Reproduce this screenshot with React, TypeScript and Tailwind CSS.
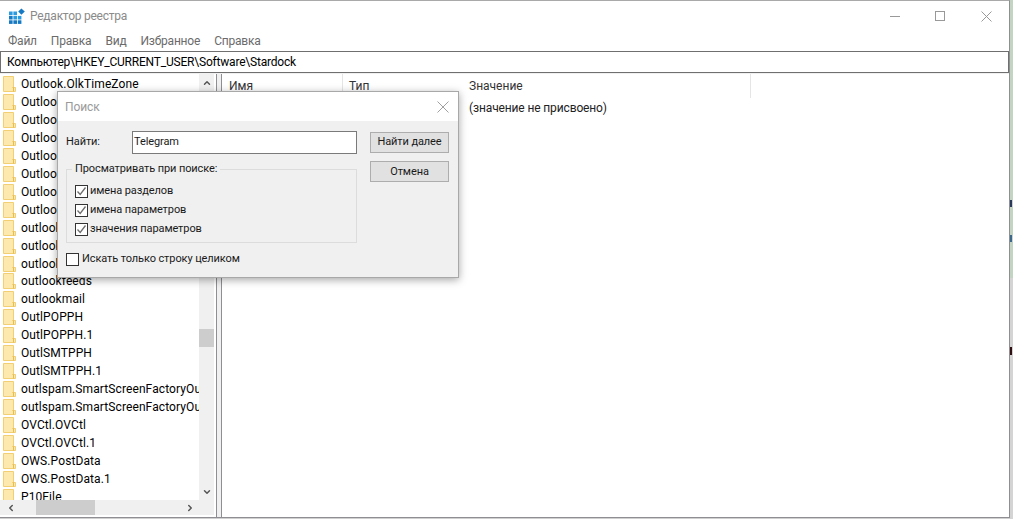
import React from 'react';
import { ChevronDown, ChevronLeft, ChevronRight, ChevronUp } from 'lucide-react';

const keys = [
  'Outlook.OlkTimeZone',
  'Outlook.OlkUserButton',
  'Outlook.OlkView',
  'Outlook.OlkWebBrowser',
  'Outlook.OMSMail',
  'Outlook.Shortcut',
  'Outlook.Sharing',
  'Outlook.Storage',
  'outlookarchive',
  'outlookcal',
  'outlookconnect',
  'outlookfeeds',
  'outlookmail',
  'OutlPOPPH',
  'OutlPOPPH.1',
  'OutlSMTPPH',
  'OutlSMTPPH.1',
  'outlspam.SmartScreenFactoryOutlook',
  'outlspam.SmartScreenFactoryOutlook.1',
  'OVCtl.OVCtl',
  'OVCtl.OVCtl.1',
  'OWS.PostData',
  'OWS.PostData.1',
  'P10File',
];

const Folder = () => (
  <svg width="13" height="16" viewBox="0 0 13 16" className="shrink-0">
    <path d="M0.5 0.5H10.5V11.5H12.5V15.5H0.5Z" fill="#fde9ad" stroke="#f2cf72" />
    <path d="M9.5 11.5H10.5V15.5" fill="none" stroke="#e6bb50" />
  </svg>
);

const Check = ({ checked = true }: { checked?: boolean }) => (
  <span className="w-[13px] h-[13px] shrink-0 border border-[#333333] bg-white flex items-center justify-center">
    {checked && (
      <svg width="11" height="11" viewBox="0 0 11 11">
        <path d="M1.5 5.5L4.2 8.5L9.5 1.5" fill="none" stroke="#6d6d6d" strokeWidth="1.3" />
      </svg>
    )}
  </span>
);

const Option = ({ label }: { label: string }) => (
  <div className="flex items-center gap-[2px] h-[19px]">
    <Check />
    <span className="pb-px">{label}</span>
  </div>
);

const App: React.FC = () => {
  return (
    <div
      className="w-[1013px] h-[519px] flex overflow-hidden bg-[#d0d0d0] text-[12px] text-[#1a1a1a]"
      style={{ fontFamily: 'Roboto, "Noto Sans", sans-serif' }}
    >
      <div className="relative w-[1010px] h-[518px] shrink-0 flex flex-col bg-[#f0f0f0] border-t border-t-[#a9a9a9] border-r border-r-[#8e8e93]">
        {/* title bar */}
        <div className="h-[30px] shrink-0 flex items-center bg-white pl-[9px]">
          <svg width="16" height="16" viewBox="0 0 16 16" className="shrink-0">
            <rect x="0" y="3.5" width="3.6" height="3.6" fill="#2a9be0" />
            <rect x="4.4" y="3.5" width="3.6" height="3.6" fill="#2a9be0" />
            <rect x="0" y="7.9" width="3.6" height="3.6" fill="#1679c4" />
            <rect x="4.4" y="7.9" width="3.6" height="3.6" fill="#2a9be0" />
            <rect x="8.8" y="7.9" width="3.6" height="3.6" fill="#2a9be0" />
            <rect x="0" y="12.3" width="3.6" height="3.6" fill="#1679c4" />
            <rect x="4.4" y="12.3" width="3.6" height="3.6" fill="#1679c4" />
            <rect x="8.8" y="12.3" width="3.6" height="3.6" fill="#1679c4" />
            <path d="M12.4 0.5L15.8 3.6L12.4 6.7L9.2 3.6Z" fill="#1679c4" />
          </svg>
          <span className="ml-[5px] text-[#8a8a8a] tracking-[-0.25px]">Редактор реестра</span>
          <div className="ml-auto flex items-center">
            <svg width="11" height="11" viewBox="0 0 11 11" className="mr-[34px]">
              <path d="M0 5.5H10" stroke="#999999" />
            </svg>
            <svg width="11" height="11" viewBox="0 0 11 11" className="mr-[35px]">
              <rect x="0.5" y="0.5" width="9" height="9" fill="none" stroke="#999999" />
            </svg>
            <svg width="11" height="11" viewBox="0 0 11 11" className="mr-[17px]">
              <path d="M0.5 0.5L10.5 10.5M10.5 0.5L0.5 10.5" stroke="#999999" />
            </svg>
          </div>
        </div>
        {/* menu */}
        <div className="h-[20px] shrink-0 flex items-center gap-[14px] bg-white pl-[8px] text-[#6b6b6b] tracking-[-0.2px]">
          <span>Файл</span>
          <span>Правка</span>
          <span>Вид</span>
          <span>Избранное</span>
          <span>Справка</span>
        </div>
        {/* address bar */}
        <div className="h-[22px] shrink-0 flex items-center bg-white border border-[#6f6f6f] pl-[6px] pb-px text-black tracking-[-0.2px]">
          Компьютер\HKEY_CURRENT_USER\Software\Stardock
        </div>
        {/* panes */}
        <div className="flex-1 min-h-0 flex pt-px border-b border-b-[#8e8e93]">
          <div className="w-[217px] shrink-0 flex flex-col bg-white border-r border-r-[#8e8e93] overflow-hidden pr-[2px] pb-[2px]">
            <div className="flex-1 min-h-0 flex">
              <div className="w-[199px] shrink-0 overflow-hidden pl-[3px] pt-px">
                {keys.map((k) => (
                  <div key={k} className="h-[17.96px] flex items-center gap-[5px] whitespace-nowrap">
                    <Folder />
                    <span className="text-black tracking-[0.1px]">{k}</span>
                  </div>
                ))}
              </div>
              <div className="w-[15px] shrink-0 flex flex-col bg-[#f0f0f0]">
                <div className="h-[17px] flex items-center justify-center">
                  <ChevronUp className="w-[10px] h-[10px] text-[#555555]" strokeWidth={3.5} />
                </div>
                <div className="h-[238px]" />
                <div className="h-[18px] bg-[#cdcdcd]" />
                <div className="flex-1" />
                <div className="h-[17px] flex items-center justify-center">
                  <ChevronDown className="w-[10px] h-[10px] text-[#555555]" strokeWidth={3.5} />
                </div>
              </div>
            </div>
            <div className="h-[15px] shrink-0 flex items-center bg-[#f0f0f0] w-[214px]">
              <div className="w-[36px] flex items-center pl-[6px]">
                <ChevronLeft className="w-[10px] h-[10px] text-[#555555]" strokeWidth={3.5} />
              </div>
              <div className="w-[59px] h-[15px] bg-[#cdcdcd]" />
              <div className="ml-[90px] w-[10px] flex items-center">
                <ChevronRight className="w-[10px] h-[10px] text-[#555555]" strokeWidth={3.5} />
              </div>
            </div>
          </div>
          <div className="w-[4px] shrink-0" />
          <div className="flex-1 min-w-0 bg-white border-l border-l-[#8e8e93]">
            <div className="h-[24px] flex items-center text-[#333333]">
              <div className="w-[121px] h-full flex items-center pl-[7px] border-r border-r-[#e5e5e5]">Имя</div>
              <div className="w-[126px] h-full flex items-center pl-[6px]">Тип</div>
              <div className="w-[282px] h-full flex items-center border-r border-r-[#e5e5e5]">Значение</div>
            </div>
            <div className="h-[20px] flex items-center pl-[247px] text-[#222222] tracking-[-0.13px]">(значение не присвоено)</div>
          </div>
        </div>

        {/* find dialog */}
        <div className="absolute left-[57px] top-[90px] w-[402px] h-[187px] flex flex-col bg-[#f0f0f0] border border-[#a8a8a8] text-[11px] tracking-[-0.1px] shadow-[0_2px_8px_rgba(0,0,0,0.35)]">
          <div className="h-[29px] shrink-0 flex items-center justify-between bg-white pl-[7px] pr-[9px] text-[12px]">
            <span className="text-[#9a9a9a]">Поиск</span>
            <svg width="12" height="12" viewBox="0 0 12 12">
              <path d="M0.5 0.5L11.5 11.5M11.5 0.5L0.5 11.5" stroke="#a0a0a0" />
            </svg>
          </div>
          <div className="flex-1 flex pl-[8px] pr-[9px] pt-[10px] gap-[13px]">
            <div className="w-[291px] flex flex-col">
              <div className="flex items-center h-[23px]">
                <span className="w-[66px] pb-px">Найти:</span>
                <div className="w-[225px] h-[23px] flex items-center border border-[#7a7a7a] bg-white pl-px pb-px">Telegram</div>
              </div>
              <div className="relative mt-[15px] h-[74px] border border-[#dcdcdc] pl-[8px] pt-[12px]">
                <span className="absolute left-[5px] -top-[9px] px-[3px] bg-[#f0f0f0]">Просматривать при поиске:</span>
                <Option label="имена разделов" />
                <Option label="имена параметров" />
                <Option label="значения параметров" />
              </div>
              <div className="flex items-center gap-[3px] mt-[10px] h-[13px]">
                <Check checked={false} />
                <span>Искать только строку целиком</span>
              </div>
            </div>
            <div className="w-[79px] flex flex-col gap-[8px] pt-px">
              <div className="h-[21px] flex items-center justify-center bg-[#e1e1e1] border border-[#adadad]">Найти далее</div>
              <div className="h-[21px] flex items-center justify-center bg-[#e1e1e1] border border-[#adadad] pt-px">Отмена</div>
            </div>
          </div>
        </div>
      </div>
      {/* desktop behind the window */}
      <div className="flex-1 flex flex-col">
        <div className="h-[200px] bg-[#c3d4c3]" />
        <div className="h-[7px] w-[2px] bg-[#2a3a5a]" />
        <div className="h-[28px] bg-[#c3d4c3]" />
        <div className="h-[7px] w-[2px] bg-[#3a6a8a]" />
        <div className="h-[36px] bg-[#c3d4c3]" />
        <div className="h-[69px] bg-[#d4d4d4]" />
        <div className="h-[8px] w-[2px] bg-[#301010]" />
        <div className="flex-1 bg-[#d4d4d4]" />
      </div>
    </div>
  );
};

export default App;
